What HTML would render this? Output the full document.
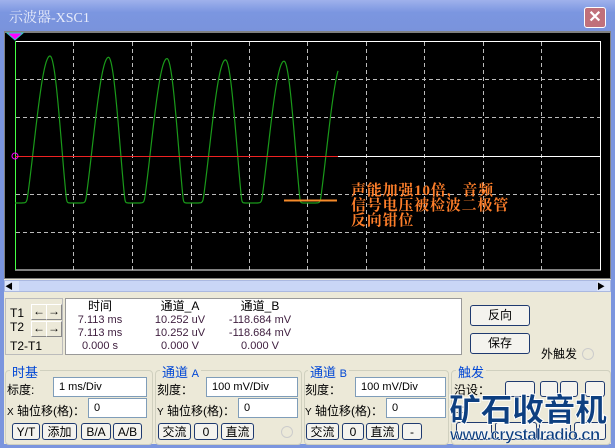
<!DOCTYPE html>
<html><head><meta charset="utf-8"><style>
*{margin:0;padding:0;box-sizing:border-box}
body{width:615px;height:448px;overflow:hidden;background:#ECE9D8;font-family:"Liberation Sans","Noto Sans CJK SC",sans-serif;font-size:11px;position:relative}
.a{position:absolute}
.title{left:0;top:0;width:615px;height:31px;background:linear-gradient(#9fb1ec,#7b96e0 40%,#7a93dc);}
.bl{background:#7b95de}
.btn{position:absolute;background:#f4f3ee;border:1px solid #1f3a70;border-radius:3px;text-align:center;font-size:12px;line-height:16px;color:#000}
.inp{position:absolute;background:#fff;border:1px solid #7f9db9;font-size:11px;padding-left:5px;line-height:19px}
.grp{position:absolute;border:1px solid #d0d0bf;border-radius:4px}
.gt{position:absolute;color:#0046d5;font-size:13px;background:#ECE9D8;padding:0 2px}
.lbl{position:absolute;font-size:12px;color:#000}
.ar{position:absolute;width:16px;height:16px;background:#ece9d8;border:1px solid #fff;border-right-color:#888;border-bottom-color:#888;font-size:12px;line-height:13px;text-align:center;font-weight:bold}
</style></head><body>
<div class="a title"></div>
<div class="a" style="left:9px;top:7px;color:#e8ecfa;font-family:'Liberation Serif','Noto Serif CJK SC',serif;font-size:14px">示波器-XSC1</div>
<div class="a" style="left:584px;top:7px;width:22px;height:21px;border:1px solid #fff;border-radius:3px;background:#c0707a;color:#fff;font-size:16px;line-height:19px;text-align:center;font-weight:bold">✕</div>
<div class="a bl" style="left:0;top:31px;width:4px;height:417px"></div>
<div class="a bl" style="left:611px;top:31px;width:4px;height:417px"></div>
<div class="a bl" style="left:0;top:444px;width:615px;height:4px"></div>
<div class="a" style="left:4px;top:31px;width:607px;height:248px;background:#808080"></div>
<div class="a" style="left:5px;top:33px;width:605px;height:245px;background:#000"></div>
<svg class="a" style="left:0;top:0" width="615" height="300">
<g stroke="#bbb" stroke-dasharray="4,3" stroke-width="1">
<path d="M73.5 42V270M132.5 42V270M191.5 42V270M249.5 42V270M307.5 42V270M366.5 42V270M424.5 42V270M483.5 42V270M541.5 42V270"/>
<path d="M16 79.5H600M16 117.5H600M16 194.5H600M16 232.5H600"/>
</g>
<rect x="15.5" y="41.5" width="585" height="228.5" fill="none" stroke="#fff"/>
<line x1="15.5" y1="41" x2="15.5" y2="270" stroke="#4f4" />
<line x1="338" y1="156.5" x2="600" y2="156.5" stroke="#fff"/>
<polyline id="w" fill="none" stroke="#1a9a1a" stroke-width="1.2" points=""/>
<line x1="15" y1="156.5" x2="338" y2="156.5" stroke="#e22"/>
<circle cx="15" cy="156" r="3" fill="none" stroke="#f0f"/>
<polygon points="7,33 23,33 15,40" fill="#f0f" stroke="#3cc"/>
<line x1="284" y1="200.5" x2="337" y2="200.5" stroke="#f58a2a" stroke-width="2"/>
</svg>
<div class="a" style="left:351px;top:184px;color:#ff7f2a;font-family:'Liberation Serif','Noto Serif CJK SC',serif;font-size:15px;letter-spacing:0.8px;font-weight:bold;line-height:15px;white-space:nowrap">声能加强10倍，音频<br>信号电压被检波二极管<br>反向钳位</div>
<div class="a" style="left:4px;top:280px;width:607px;height:12px;background:#c9d6f6;border:1px solid #aab8e0"></div>
<div class="a" style="left:5px;top:281px;width:14px;height:10px;background:#dde6fb;font-size:8px">◀</div>
<div class="a" style="left:597px;top:281px;width:13px;height:10px;background:#dde6fb;font-size:8px">▶</div>
<div class="a" style="left:5px;top:298px;width:58px;height:57px;border:1px solid #bbb"></div>
<div class="lbl" style="left:10px;top:306px">T1</div>
<div class="lbl" style="left:10px;top:320px">T2</div>
<div class="lbl" style="left:10px;top:339px">T2-T1</div>
<div class="ar" style="left:31px;top:304px">←</div><div class="ar" style="left:46px;top:304px">→</div>
<div class="ar" style="left:31px;top:321px">←</div><div class="ar" style="left:46px;top:321px">→</div>
<div class="a" style="left:65px;top:298px;width:397px;height:57px;background:#fff;border:1px solid #999"></div>
<div class="a" style="left:70px;top:300px;width:260px;font-size:11px;line-height:13px;color:#000">
<div class="a" style="left:0;width:60px;text-align:center"><span style="font-size:12px">时间</span><br><span style="color:#402040">7.113 ms<br>7.113 ms<br>0.000 s</span></div>
<div class="a" style="left:80px;width:60px;text-align:center"><span style="font-size:12px">通道_A</span><br><span style="color:#402040">10.252 uV<br>10.252 uV<br>0.000 V</span></div>
<div class="a" style="left:155px;width:70px;text-align:center"><span style="font-size:12px">通道_B</span><br><span style="color:#402040">-118.684 mV<br>-118.684 mV<br>0.000 V</span></div>
</div>
<div class="btn" style="left:470px;top:305px;width:60px;height:21px;line-height:19px">反向</div>
<div class="btn" style="left:470px;top:333px;width:60px;height:21px;line-height:19px">保存</div>
<div class="lbl" style="left:541px;top:345px">外触发</div>
<div class="a" style="left:582px;top:348px;width:12px;height:12px;border:1px solid #ccc;border-radius:50%"></div>

<div class="grp" style="left:5px;top:370px;width:148px;height:75px"></div><div class="gt" style="left:10px;top:362px">时基</div>
<div class="grp" style="left:155px;top:370px;width:147px;height:75px"></div><div class="gt" style="left:160px;top:362px">通道 <span style="font-size:11px">A</span></div>
<div class="grp" style="left:304px;top:370px;width:145px;height:75px"></div><div class="gt" style="left:308px;top:362px">通道 <span style="font-size:11px">B</span></div>
<div class="grp" style="left:451px;top:370px;width:160px;height:75px"></div><div class="gt" style="left:456px;top:362px">触发</div>

<div class="lbl" style="left:7px;top:381px">标度:</div><div class="inp" style="left:53px;top:377px;width:94px;height:20px">1 ms/Div</div>
<div class="lbl" style="left:7px;top:402px"><span style="font-size:10px">X</span> 轴位移(格)：</div><div class="inp" style="left:88px;top:398px;width:59px;height:20px">0</div>
<div class="btn" style="left:12px;top:423px;width:28px;height:17px">Y/T</div>
<div class="btn" style="left:42px;top:423px;width:35px;height:17px">添加</div>
<div class="btn" style="left:81px;top:423px;width:30px;height:17px">B/A</div>
<div class="btn" style="left:113px;top:423px;width:29px;height:17px">A/B</div>

<div class="lbl" style="left:157px;top:381px">刻度：</div><div class="inp" style="left:206px;top:377px;width:92px;height:20px">100 mV/Div</div>
<div class="lbl" style="left:157px;top:402px"><span style="font-size:10px">Y</span> 轴位移(格)：</div><div class="inp" style="left:238px;top:398px;width:60px;height:20px">0</div>
<div class="btn" style="left:158px;top:423px;width:33px;height:17px">交流</div>
<div class="btn" style="left:194px;top:423px;width:24px;height:17px">0</div>
<div class="btn" style="left:221px;top:423px;width:33px;height:17px">直流</div>
<div class="a" style="left:281px;top:426px;width:12px;height:12px;border:1px solid #ccc;border-radius:50%"></div>

<div class="lbl" style="left:305px;top:381px">刻度：</div><div class="inp" style="left:355px;top:377px;width:91px;height:20px">100 mV/Div</div>
<div class="lbl" style="left:305px;top:402px"><span style="font-size:10px">Y</span> 轴位移(格)：</div><div class="inp" style="left:386px;top:398px;width:60px;height:20px">0</div>
<div class="btn" style="left:306px;top:423px;width:33px;height:17px">交流</div>
<div class="btn" style="left:342px;top:423px;width:22px;height:17px">0</div>
<div class="btn" style="left:366px;top:423px;width:33px;height:17px">直流</div>
<div class="btn" style="left:402px;top:423px;width:20px;height:17px">-</div>

<div class="lbl" style="left:454px;top:381px">沿设：</div>
<div class="btn" style="left:505px;top:381px;width:30px;height:16px"></div>
<div class="btn" style="left:540px;top:381px;width:18px;height:16px"></div>
<div class="btn" style="left:560px;top:381px;width:18px;height:16px"></div>
<div class="btn" style="left:585px;top:381px;width:20px;height:16px"></div>
<div class="lbl" style="left:456px;top:403px">平</div>
<div class="btn" style="left:456px;top:422px;width:36px;height:18px"></div>
<div class="btn" style="left:495px;top:422px;width:42px;height:18px"></div>
<div class="btn" style="left:539px;top:422px;width:32px;height:18px"></div>
<div class="btn" style="left:574px;top:422px;width:32px;height:18px"></div>
<div class="a" style="left:449px;top:389px;font-size:32px;font-weight:900;color:#0d3f80;letter-spacing:-0.5px;line-height:38px;-webkit-text-stroke:1px #fff;white-space:nowrap;font-family:'Noto Sans CJK SC',sans-serif">矿石收音机</div>
<div class="a" style="left:450px;top:425px;font-size:17px;font-weight:bold;color:#0d3f80;line-height:20px;letter-spacing:-0.8px;-webkit-text-stroke:0.5px #fff;white-space:nowrap">www.crystalradio.cn</div>
<script>
var p=[],P=58.5;
for(var x=15;x<=338;x+=0.5){
 // distance from nearest peak
 var k=Math.round((x-50)/P), d=x-(50+k*P);
 var pk=56+Math.max(0,k)*1.3, tr=203;
 // asymmetric phase: falling side faster
 var th = d>=0 ? d*1.25 : -d*0.9;
 th=Math.min(th,29.25)/29.25*Math.PI;
 var y=pk+90*(1-Math.cos(th));
 if(y>tr-6){var e=y-(tr-6); y=tr-6+6*(1-Math.exp(-e/6));}
 p.push(x+","+y.toFixed(1));
}
document.getElementById('w').setAttribute('points',p.join(' '));
</script>
</body></html>
